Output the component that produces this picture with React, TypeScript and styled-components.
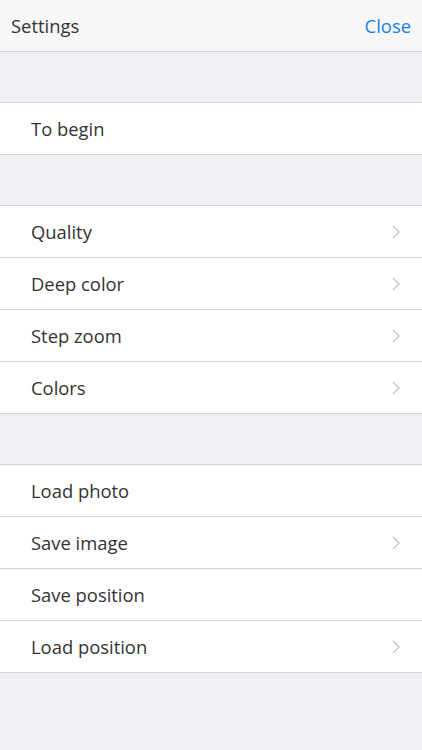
import React from "react";
import styled, { createGlobalStyle } from "styled-components";

const Global = createGlobalStyle`
  html, body { margin: 0; padding: 0; background: #efeff4; }
  body { font-family: "Open Sans", "Noto Sans", sans-serif; }
`;

const Page = styled.div`
  width: 422px;
  min-height: 750px;
  background: #efeff4;
  display: flex;
  flex-direction: column;
`;

const Header = styled.div`
  height: 51px;
  background: #f7f7f7;
  border-bottom: 1px solid #d4d4d8;
  display: flex;
  align-items: center;
  justify-content: space-between;
  padding: 0 11px;
`;

const Title = styled.div`
  font-size: 18.4px;
  color: #333;
`;

const CloseBtn = styled.div`
  font-size: 18.4px;
  color: #1b80e0;
`;

const Gap = styled.div`
  height: 50px;
`;

const Group = styled.div`
  background: #fff;
  border-top: 1px solid #d4d4d8;
  border-bottom: 1px solid #d4d4d8;
  display: flex;
  flex-direction: column;
`;

const Row = styled.div<{ $last?: boolean }>`
  height: 51px;
  display: flex;
  align-items: center;
  justify-content: space-between;
  padding: 0 22px 0 31px;
  border-bottom: ${(p) => (p.$last ? "none" : "1px solid #d4d4d8")};
  font-size: 18.4px;
  color: #333;
`;

const Chevron = () => (
  <svg width="8" height="14" viewBox="0 0 8 14">
    <path d="M1 1 L7 7 L1 13" fill="none" stroke="#c4c4c8" strokeWidth="1.3" />
  </svg>
);

type Item = { label: string; chevron?: boolean };

const groups: Item[][] = [
  [{ label: "To begin" }],
  [
    { label: "Quality", chevron: true },
    { label: "Deep color", chevron: true },
    { label: "Step zoom", chevron: true },
    { label: "Colors", chevron: true },
  ],
  [
    { label: "Load photo" },
    { label: "Save image", chevron: true },
    { label: "Save position" },
    { label: "Load position", chevron: true },
  ],
];

export default function App() {
  return (
    <Page>
      <Global />
      <Header>
        <Title>Settings</Title>
        <CloseBtn>Close</CloseBtn>
      </Header>
      {groups.map((g, gi) => (
        <React.Fragment key={gi}>
          <Gap />
          <Group>
            {g.map((it, i) => (
              <Row key={it.label} $last={i === g.length - 1}>
                <span>{it.label}</span>
                {it.chevron && <Chevron />}
              </Row>
            ))}
          </Group>
        </React.Fragment>
      ))}
    </Page>
  );
}
